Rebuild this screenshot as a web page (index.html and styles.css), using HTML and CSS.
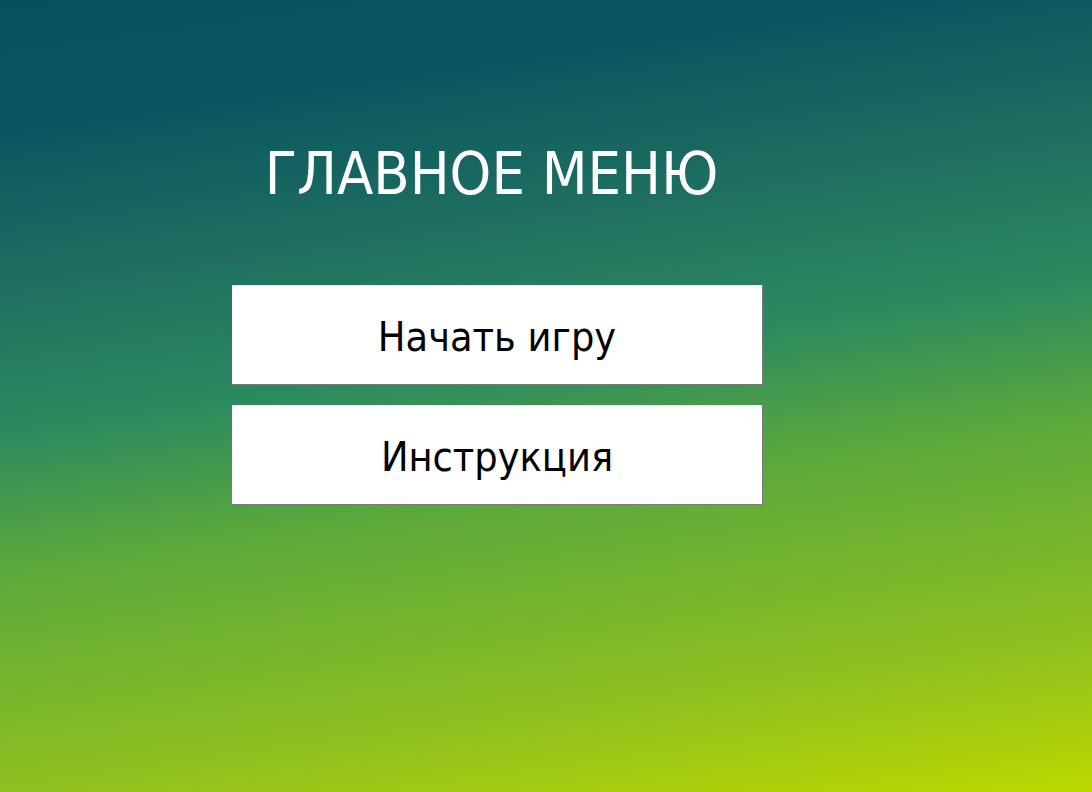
FILE: index.html
```html
<!DOCTYPE html>
<html lang="ru">
<head>
<meta charset="utf-8">
<title>Главное меню</title>
<link rel="stylesheet" href="styles.css">
</head>
<body>
<main class="screen">
  <section class="menu">
    <h1 class="menu-title">ГЛАВНОЕ МЕНЮ</h1>
    <div class="menu-buttons">
      <button class="menu-btn" type="button">Начать игру</button>
      <button class="menu-btn" type="button">Инструкция</button>
    </div>
  </section>
</main>
</body>
</html>
```
FILE: styles.css
```css
html, body {
  margin: 0;
  padding: 0;
}
body {
  width: 1092px;
  height: 792px;
  overflow: hidden;
  font-family: "DejaVu Sans", "Liberation Sans", sans-serif;
  font-stretch: condensed;
}
.screen {
  width: 1092px;
  height: 792px;
  background: linear-gradient(172deg, #06505e 0%, #0a5660 14%, #1f7060 31%, #2c8a5f 46%, #5aa83c 60%, #90c020 84%, #bcd800 100%);
  display: flex;
}
.menu {
  margin-left: 232px;
  width: 531px;
  display: flex;
  flex-direction: column;
  align-items: center;
}
.menu-title {
  margin: 139px 0 0 -12px;
  font-weight: normal;
  font-size: 59px;
  line-height: 70px;
  color: #fff;
}
.menu-buttons {
  margin-top: 76px;
  display: flex;
  flex-direction: column;
  gap: 20px;
  width: 100%;
}
.menu-btn {
  height: 100px;
  width: 100%;
  background: #fff;
  border: 0;
  border-right: 1px solid #7a7a7a;
  border-bottom: 1px solid #7a7a7a;
  font-family: inherit;
  font-stretch: condensed;
  font-size: 41px;
  color: #000;
  padding: 5px 0 0;
}
```
